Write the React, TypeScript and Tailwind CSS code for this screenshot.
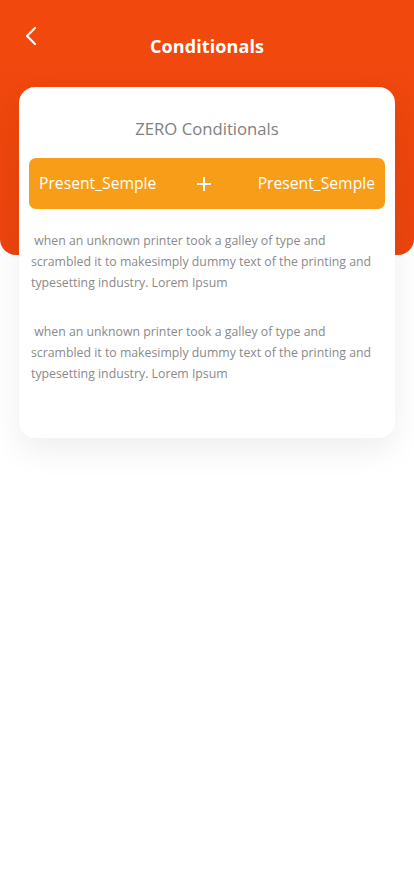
import React from "react";

function Para({ className }: { className: string }) {
  return (
    <p className={className}>
      {"\u00a0when an unknown printer took a galley of type and"}
      <br />
      scrambled it to makesimply dummy text of the printing and
      <br />
      typesetting industry. Lorem Ipsum
    </p>
  );
}

export default function App() {
  return (
    <div
      className="min-h-[896px] w-[414px] bg-white"
      style={{ fontFamily: '"Open Sans", "Noto Sans", sans-serif' }}
    >
      <div className="h-[255px] rounded-b-[16px] bg-gradient-to-b from-[#f1490d] to-[#ec440e] px-[24px] pt-[24px]">
        <div className="relative flex h-[44px] items-center justify-center">
          <svg
            className="absolute left-[0px] top-[2px]"
            width="16"
            height="20"
            viewBox="0 0 16 20"
            fill="none"
          >
            <path
              d="M11 2 L3 10 L11 18"
              stroke="white"
              strokeWidth="2.2"
              strokeLinecap="round"
              strokeLinejoin="round"
            />
          </svg>
          <h1 className="text-[18px] font-bold text-white tracking-[0.1px]">Conditionals</h1>
        </div>
      </div>
      <div className="mx-[19px] -mt-[168px] rounded-[16px] bg-white pb-[54px] pt-[30px] shadow-[0_12px_32px_rgba(0,0,0,0.07)]">
        <div className="text-center text-[16.7px] leading-[24px] text-[#7f7f7f]">ZERO Conditionals</div>
        <div className="mx-[10px] mt-[17px] flex h-[51px] items-center justify-between rounded-[7px] bg-[#f79d18] px-[10px] text-[15.7px] font-medium text-white">
          <span>Present_Semple</span>
          <svg width="16" height="16" viewBox="0 0 16 16" className="mr-[6px]">
            <path d="M8 1 V15 M1 8 H15" stroke="white" strokeWidth="2" />
          </svg>
          <span>Present_Semple</span>
        </div>
        <Para className="mt-[21px] whitespace-nowrap px-[12px] text-[12.3px] leading-[21px] text-[#8a8a8a]" />
        <Para className="mt-[28px] whitespace-nowrap px-[12px] text-[12.3px] leading-[21px] text-[#8a8a8a]" />
      </div>
    </div>
  );
}
